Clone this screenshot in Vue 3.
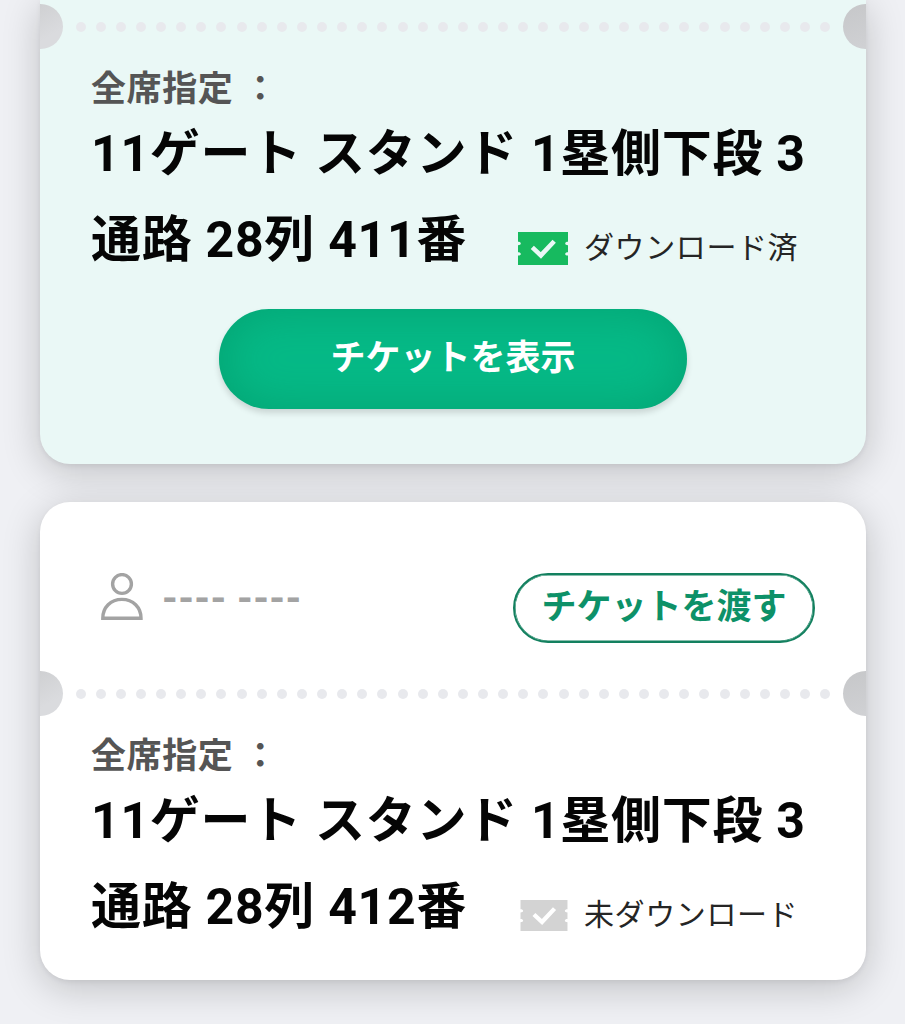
<template>
  <div class="ticket-list">
    <section
      v-for="ticket in tickets"
      :key="ticket.id"
      class="ticket"
      :class="{ 'ticket--downloaded': ticket.downloaded }"
    >
      <header v-if="!ticket.downloaded" class="ticket__header">
        <div class="ticket__owner">
          <svg class="ticket__user" viewBox="0 0 42 48" fill="none" stroke="#a3a3a3" stroke-width="3.4">
            <circle cx="21" cy="11" r="9.4" />
            <path d="M1.8 45.2C1.8 34.5 9.6 26.4 20.9 26.4S40 34.5 40 45.2Z" />
          </svg>
          <span class="ticket__name">{{ ticket.owner }}</span>
        </div>
        <button class="btn-transfer" type="button">チケットを渡す</button>
      </header>

      <div class="perforation">
        <span class="perforation__notch perforation__notch--left"></span>
        <span class="perforation__dots">
          <i v-for="n in 38" :key="n" class="perforation__dot"></i>
        </span>
        <span class="perforation__notch perforation__notch--right"></span>
      </div>

      <div class="ticket__body">
        <div class="ticket__label">全席指定 ：</div>
        <div class="ticket__seat">{{ ticket.seat[0] }}</div>
        <div class="ticket__row">
          <div class="ticket__seat">{{ ticket.seat[1] }}</div>
          <div class="status">
            <svg class="status__icon" viewBox="0 0 50 33">
              <path
                class="status__shape"
                d="M0 0H50V9.8C48.3 9.8 47.2 10.4 47.2 11.5S48.3 13.2 50 13.2V20.2C48.3 20.2 47.2 20.8 47.2 21.9S48.3 23.6 50 23.6V33H0V23.6C1.7 23.6 2.8 23 2.8 21.9S1.7 20.2 0 20.2V13.2C1.7 13.2 2.8 12.6 2.8 11.5S1.7 9.8 0 9.8Z"
              />
              <path class="status__check" d="M14.3 15.4L22.9 23.4L36.2 9.2" />
            </svg>
            <span class="status__text">{{ ticket.status }}</span>
          </div>
        </div>
        <button v-if="ticket.downloaded" class="btn-show" type="button">チケットを表示</button>
      </div>
    </section>
  </div>
</template>

<script setup>
const tickets = [
  {
    id: 411,
    downloaded: true,
    seat: ['11ゲート スタンド 1塁側下段 3', '通路 28列 411番'],
    status: 'ダウンロード済'
  },
  {
    id: 412,
    downloaded: false,
    owner: '---- ----',
    seat: ['11ゲート スタンド 1塁側下段 3', '通路 28列 412番'],
    status: '未ダウンロード'
  }
]
</script>

<style>
body {
  margin: 0;
  background: #eff0f4;
}
</style>

<style scoped>
.ticket-list {
  box-sizing: border-box;
  height: 1024px;
  overflow: hidden;
  padding: 0 39px 0 40px;
  display: flex;
  flex-direction: column;
  gap: 38px;
  font-family: Roboto, 'Noto Sans CJK JP', sans-serif;
}

.ticket {
  box-sizing: border-box;
  flex: none;
  height: 478px;
  border-radius: 30px;
  background: #fff;
  box-shadow: 0 8px 38px rgba(0, 4, 0, 0.2), 0 2px 5px rgba(0, 0, 0, 0.06);
}

.ticket--downloaded {
  height: 464px;
  padding-top: 4px;
  border-radius: 0 0 30px 30px;
  background: #eaf8f6;
}

.ticket__header {
  box-sizing: border-box;
  height: 169px;
  padding: 71px 51px 0 61px;
  display: flex;
  justify-content: space-between;
  align-items: flex-start;
}

.ticket__owner {
  display: flex;
  align-items: center;
  gap: 19px;
}

.ticket__user {
  width: 42px;
  height: 48px;
}

.ticket__name {
  padding-top: 4px;
  color: #a3a3a3;
  font-size: 40px;
  font-weight: 700;
  line-height: 44px;
  letter-spacing: 0.4px;
}

.btn-transfer {
  box-sizing: border-box;
  width: 302px;
  height: 70px;
  padding: 0;
  border: 2px solid #13805f;
  border-radius: 35px;
  background: #fff;
  box-shadow: inset 0 0 0 0.6px #13805f;
  color: #0d9168;
  font-family: inherit;
  font-size: 35px;
  font-weight: 700;
  line-height: 50px;
}

.perforation {
  height: 45px;
  display: flex;
  align-items: center;
  justify-content: space-between;
}

.perforation__notch {
  width: 23px;
  height: 45px;
}

.perforation__notch--left {
  border-radius: 0 23px 23px 0;
  background: linear-gradient(150deg, #cfd0d2, #dadbde 65%);
}

.perforation__notch--right {
  border-radius: 23px 0 0 23px;
  background: linear-gradient(160deg, #c6c7c9, #d0d1d4);
}

.perforation__dots {
  width: 755px;
  display: flex;
  justify-content: space-between;
}

.perforation__dot {
  width: 10px;
  height: 10px;
  border-radius: 50%;
  background: #e8e9ed;
}

.ticket__body {
  padding: 16px 0 0 51px;
}

.ticket__label {
  height: 46px;
  color: #555;
  font-size: 35px;
  font-weight: 700;
  line-height: 50px;
  letter-spacing: 0.6px;
  white-space: nowrap;
}

.ticket__seat {
  height: 86px;
  color: #050505;
  font-size: 50px;
  font-weight: 700;
  line-height: 86px;
  letter-spacing: 0.7px;
  white-space: nowrap;
}

.ticket__row {
  display: flex;
}

.status {
  margin: 26px 0 0 51px;
  display: flex;
  align-items: center;
  height: 50px;
  gap: 16px;
}

.status__icon {
  width: 48px;
  height: 31px;
  margin-left: 2px;
}

.ticket--downloaded .status__icon {
  width: 50px;
  height: 33px;
  margin-left: 0;
}

.status__shape {
  fill: #d3d3d3;
}

.ticket--downloaded .status__shape {
  fill: #17ba5f;
}

.status__check {
  fill: none;
  stroke: #fff;
  stroke-width: 4.6;
}

.ticket--downloaded .status__check {
  stroke: #eaf8f6;
}

.status__text {
  color: #252525;
  font-size: 30px;
  line-height: 44px;
  letter-spacing: 0.6px;
}

.btn-show {
  display: block;
  width: 468px;
  height: 100px;
  margin: 26px 0 0 128px;
  padding: 0;
  border: 0;
  border-radius: 50px;
  background: #06ba87;
  box-shadow: inset 0 0 50px rgba(0, 130, 85, 0.42), 0 4px 6px rgba(0, 0, 0, 0.14);
  color: #fff;
  font-family: inherit;
  font-size: 35px;
  font-weight: 700;
  line-height: 50px;
}
</style>
